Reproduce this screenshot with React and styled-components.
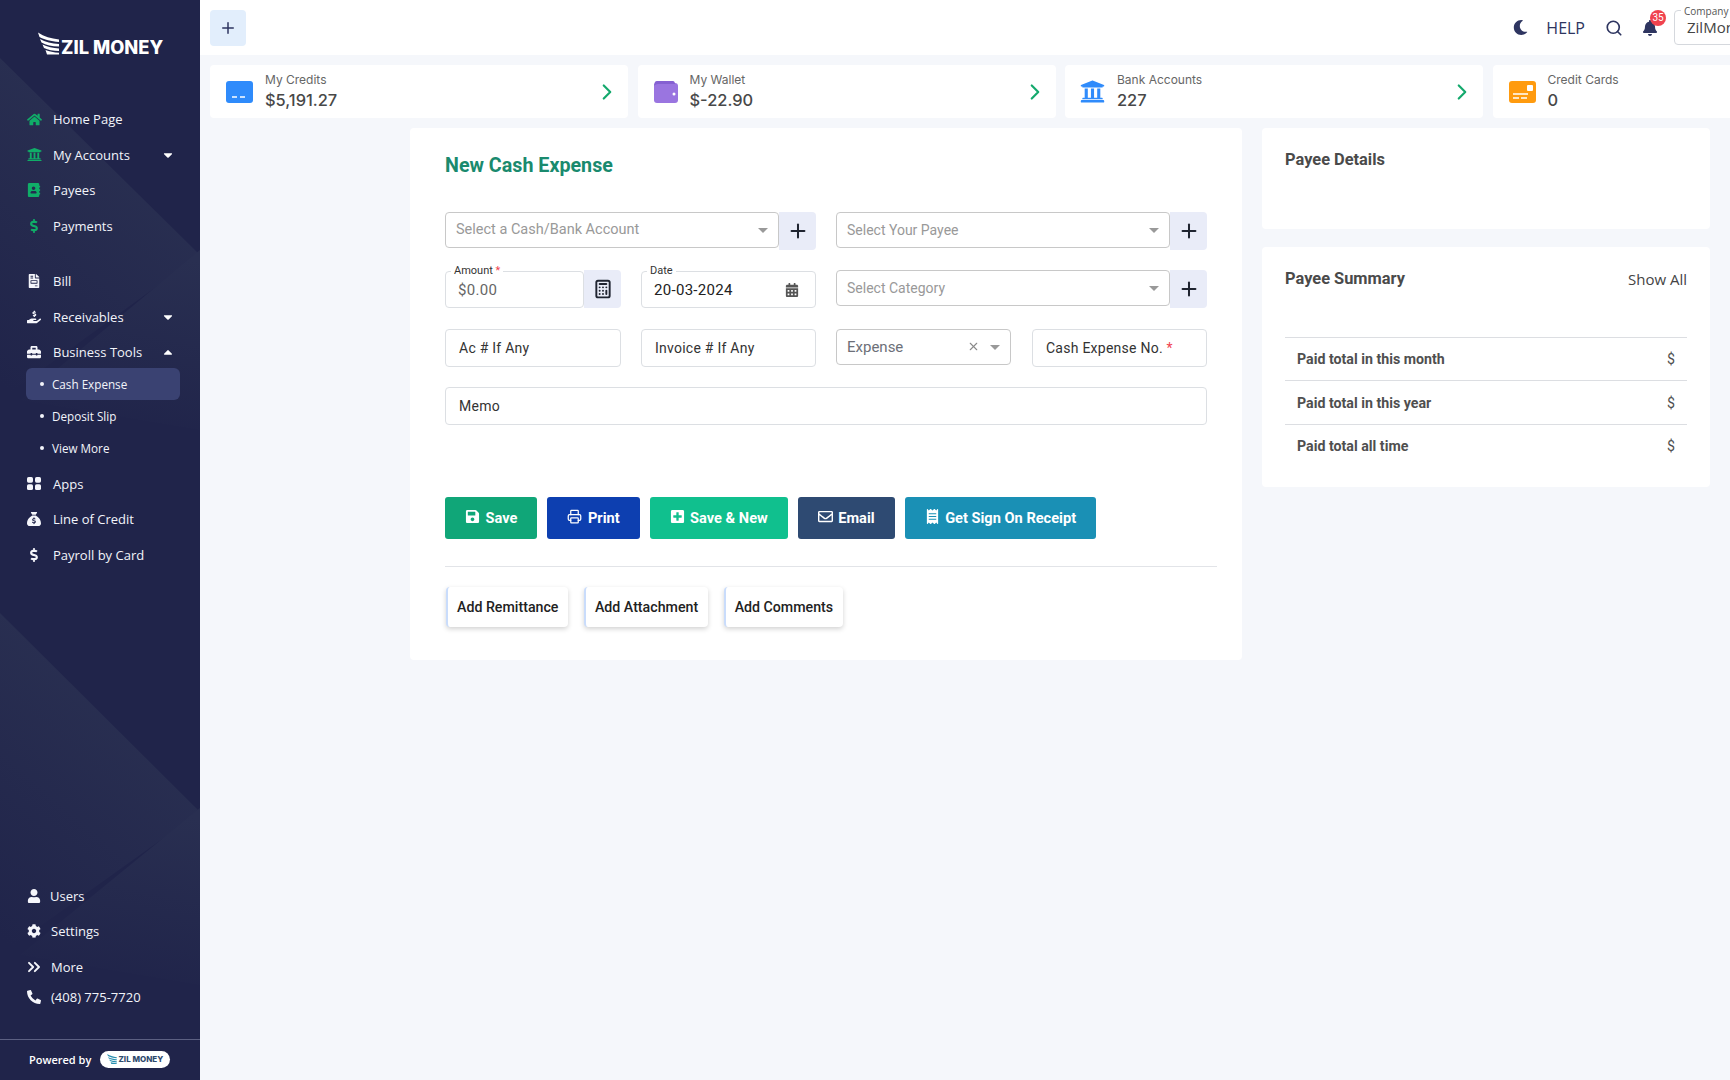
import React from 'react';
import styled, { createGlobalStyle } from 'styled-components';
import {
  FaHome, FaUniversity, FaAddressBook, FaDollarSign, FaFileInvoice, FaHandHoldingUsd, FaToolbox,
  FaUser, FaCog, FaPhoneAlt, FaCaretDown, FaCaretUp, FaSave, FaPlusSquare, FaRegEnvelope,
  FaReceipt, FaMoon, FaBell, FaCalendarAlt,
} from 'react-icons/fa';
import { FaSackDollar } from 'react-icons/fa6';
import { ChevronsRight, ChevronRight, Plus, Search, Printer, Calculator, X } from 'lucide-react';

const GlobalStyle = createGlobalStyle`
  html, body {
    margin: 0;
    height: 100%;
    overflow: hidden;
    background: #f5f7fb;
  }
  * { box-sizing: border-box; }
`;

const Page = styled.div`
  display: flex;
  width: 1730px;
  height: 1080px;
  overflow: hidden;
  font-family: Roboto, "Liberation Sans", sans-serif;
`;

/* sidebar */
const Sidebar = styled.aside`
  position: relative;
  flex: 0 0 200px;
  display: flex;
  flex-direction: column;
  background: #20244a;
  color: #f2f4fa;
  font-family: "Open Sans", "Liberation Sans", sans-serif;
  overflow: hidden;
`;

const SideArt = styled.svg`
  position: absolute;
  top: 0;
  left: 0;
  pointer-events: none;
`;

const LogoBlock = styled.div`
  position: relative;
  height: 101.5px;
  padding: 32px 0 0 38px;
  display: flex;
  align-items: flex-start;
  gap: 2px;
`;

const LogoText = styled.span`
  font-family: Inter, "Liberation Sans", sans-serif;
  font-weight: 800;
  font-size: 18.3px;
  line-height: 22px;
  margin-top: 4px;
  color: #fff;
  white-space: nowrap;
`;

const Nav = styled.nav`
  position: relative;
  display: flex;
  flex-direction: column;
  padding: 0 25px 0 27px;
`;

const BottomNav = styled(Nav)`
  margin-top: auto;
  padding-bottom: 30px;
`;

const NavGap = styled.div`
  height: 20px;
`;

const NavItem = styled.div`
  display: flex;
  align-items: center;
  height: ${(p) => p.$height || 35.5}px;
  font-size: 13px;
  white-space: nowrap;
`;

const NavIcon = styled.span`
  flex: 0 0 ${(p) => p.$slot || 26}px;
  display: flex;
  align-items: center;
  font-size: 14px;
  color: ${(p) => (p.$green ? '#10ad68' : '#f5f6fb')};
`;

const MoreIcon = styled(ChevronsRight)`
  margin-left: -3px;
`;

const Caret = styled.span`
  margin-left: auto;
  display: flex;
  font-size: 14px;
  color: #fff;
`;

const SubList = styled.div`
  display: flex;
  flex-direction: column;
  width: 154px;
  margin: -2px 0 2px -1px;
`;

const SubItem = styled.div`
  display: flex;
  align-items: center;
  gap: 8px;
  height: 32px;
  padding-left: 14px;
  border-radius: 6px;
  font-size: 11.7px;
  background: ${(p) => (p.$active ? '#3a4272' : 'transparent')};
  &::before {
    content: '';
    width: 4px;
    height: 4px;
    border-radius: 50%;
    background: #f2f4fa;
  }
`;

const PoweredRow = styled.div`
  position: relative;
  height: 41px;
  border-top: 1px solid #5c6082;
  display: flex;
  align-items: center;
  padding: 0 0 2px 29px;
  gap: 9px;
  font-size: 11px;
  font-weight: 600;
  color: #fff;
`;

const PoweredPill = styled.div`
  width: 70px;
  height: 17px;
  border-radius: 9px;
  background: #fff;
  display: flex;
  align-items: center;
  justify-content: center;
  gap: 1px;
  font-family: Inter, "Liberation Sans", sans-serif;
  font-size: 8px;
  font-weight: 800;
  color: #2e4a6e;
`;

/* main */
const Main = styled.main`
  flex: 1;
  min-width: 0;
  display: flex;
  flex-direction: column;
`;

const TopBar = styled.header`
  height: 55px;
  flex: 0 0 55px;
  background: #fff;
  display: flex;
  align-items: center;
  padding-left: 10px;
`;

const AddButton = styled.div`
  width: 36px;
  height: 36px;
  border-radius: 4px;
  background: #e2eefc;
  color: #2e3560;
  display: flex;
  align-items: center;
  justify-content: center;
`;

const TopActions = styled.div`
  margin-left: auto;
  display: flex;
  align-items: center;
  color: #2e3560;
`;

const Help = styled.span`
  font-family: "Open Sans", "Liberation Sans", sans-serif;
  font-size: 16px;
  margin: 0 20px 0 18px;
`;

const BellWrap = styled.span`
  position: relative;
  display: flex;
  margin: 0 16px 0 19px;
  font-size: 16px;
`;

const Badge = styled.span`
  position: absolute;
  top: -10px;
  left: 8px;
  width: 16px;
  height: 16px;
  border-radius: 50%;
  background: #f0434f;
  color: #fff;
  font-size: 10px;
  line-height: 16px;
  text-align: center;
`;

const CompanyBox = styled.div`
  position: relative;
  width: 160px;
  height: 35px;
  margin-right: -104px;
  border: 1px solid #d5d8dd;
  border-radius: 4px;
  padding: 6px 0 0 12px;
  font-family: "Open Sans", "Liberation Sans", sans-serif;
  font-size: 15px;
  line-height: 20px;
  color: #444;
`;

const CompanyLabel = styled.span`
  position: absolute;
  top: -6px;
  left: 6px;
  padding: 0 3px;
  background: #fff;
  font-size: 10px;
  line-height: 13px;
  color: #555;
`;

const StatRow = styled.div`
  display: flex;
  gap: 9.5px;
  padding: 10px 0 0 10px;
`;

const StatCard = styled.div`
  flex: 0 0 418px;
  height: 53px;
  background: #fff;
  border-radius: 4px;
  display: flex;
  align-items: center;
  gap: 12px;
  padding: 0 8px 0 ${(p) => p.$pad || 16}px;
`;

const StatText = styled.div`
  display: flex;
  flex-direction: column;
  gap: 2px;
  flex: 1;
  font-family: Inter, "Liberation Sans", sans-serif;
`;

const StatLabel = styled.span`
  font-size: 12px;
  line-height: 15px;
  color: #666;
`;

const StatValue = styled.span`
  font-size: 16.4px;
  font-weight: 500;
  line-height: 22px;
  color: #484848;
`;

const StatArrow = styled.span`
  display: flex;
  color: #14a96d;
`;

const Content = styled.div`
  display: flex;
  justify-content: flex-end;
  align-items: flex-start;
  gap: 20px;
  padding: 10px 20px 0 0;
`;

const FormCard = styled.section`
  width: 832px;
  height: 532px;
  background: #fff;
  border-radius: 4px;
  padding: 26px 25px 0 35px;
`;

const FormTitle = styled.h2`
  margin: 0 0 34px;
  font-size: 19.7px;
  line-height: 24px;
  font-weight: 700;
  color: #1a8a6e;
`;

const FieldGrid = styled.div`
  display: grid;
  width: 762px;
  grid-template-columns: 371px 371px;
  grid-template-rows: 38px 39px 38px 38px;
  gap: 20px;
`;

const FieldRow = styled.div`
  display: flex;
`;

const Split = styled.div`
  display: grid;
  grid-template-columns: ${(p) => p.$first || 176}px 175px;
  gap: ${(p) => p.$gap || 20}px;
`;

const Wide = styled.div`
  grid-column: 1 / 3;
  display: flex;
`;

const Select = styled.div`
  flex: 1;
  height: 36px;
  border: 1px solid #c8c8c8;
  border-radius: 4px;
  background: #fff;
  display: flex;
  align-items: center;
  padding: 0 10px 1px;
  font-size: ${(p) => p.$size || 14}px;
  color: ${(p) => p.$color || '#999'};
`;

const SelectCaret = styled.span`
  margin-left: ${(p) => (p.$inline ? 0 : 'auto')};
  width: 0;
  height: 0;
  margin-top: 1px;
  border-left: 5px solid transparent;
  border-right: 5px solid transparent;
  border-top: 5px solid #999;
`;

const SelectClear = styled.span`
  margin-left: auto;
  margin-right: 10px;
  display: flex;
  color: #8a8a8a;
`;

const Addon = styled.div`
  flex: 0 0 37px;
  height: 38px;
  background: #e9ecf8;
  border-radius: 0 4px 4px 0;
  display: flex;
  align-items: center;
  justify-content: center;
  color: #1f2430;
`;

const Input = styled.div`
  position: relative;
  flex: 1;
  height: ${(p) => p.$height || 38}px;
  margin-top: ${(p) => p.$top || 0}px;
  border: 1px solid #dcdfe3;
  border-radius: 4px;
  background: #fff;
  display: flex;
  align-items: center;
  padding: 0 13px;
  font-size: 14px;
  letter-spacing: 0.25px;
  color: #333;
`;

const Legend = styled.span`
  position: absolute;
  top: -8px;
  left: 5px;
  padding: 0 3px;
  background: #fff;
  font-size: 11px;
  line-height: 13px;
  letter-spacing: 0;
  color: #333;
`;

const Required = styled.span`
  color: #f0434f;
`;

const InputValue = styled.span`
  font-size: 15px;
  margin-left: -1px;
  letter-spacing: 0.3px;
  color: ${(p) => p.$color || '#222'};
`;

const DateIcon = styled.span`
  margin-left: auto;
  margin-right: 3px;
  display: flex;
  font-size: 14px;
  color: #555;
`;

const ActionRow = styled.div`
  display: flex;
  gap: 10px;
  margin-top: 72px;
`;

const ActionButton = styled.div`
  height: 42px;
  border-radius: 3px;
  background: ${(p) => p.$bg};
  color: #fff;
  display: flex;
  align-items: center;
  gap: 5.5px;
  padding: 0 20px;
  font-size: 14.6px;
  font-weight: 700;
  svg { flex: none; margin-top: -3px; }
`;

const Divider = styled.hr`
  margin: 27px 0 20px;
  border: 0;
  border-top: 1px solid #e2e4e8;
`;

const ExtraRow = styled.div`
  display: flex;
  gap: 15.5px;
  padding-left: 1px;
`;

const ExtraButton = styled.div`
  height: 40px;
  display: flex;
  align-items: center;
  padding: 0 10px 0 9px;
  background: #fff;
  border-left: 2px solid #c9dcfb;
  border-radius: 4px;
  box-shadow: 0 2px 5px rgba(0, 0, 0, 0.18);
  font-size: 14.2px;
  font-weight: 500;
  color: #222;
`;

const SideColumn = styled.div`
  width: 448px;
  display: flex;
  flex-direction: column;
  gap: 18px;
`;

const SideCard = styled.section`
  height: ${(p) => p.$height}px;
  background: #fff;
  border-radius: 4px;
  padding: 22px 23px 0;
`;

const SideHead = styled.div`
  display: flex;
  justify-content: space-between;
  align-items: center;
  height: 20px;
`;

const SideTitle = styled.h3`
  margin: 0;
  font-size: 16.4px;
  line-height: 20px;
  font-weight: 700;
  color: #4a4a4a;
`;

const ShowAll = styled.span`
  font-family: "Open Sans", "Liberation Sans", sans-serif;
  font-size: 15px;
  color: #444;
`;

const SummaryList = styled.div`
  margin-top: 47.9px;
`;

const SummaryRow = styled.div`
  height: 43.5px;
  border-top: 1px solid #dcdee2;
  display: flex;
  justify-content: space-between;
  align-items: center;
  padding: 0 12px;
  font-size: 14.2px;
  font-weight: 700;
  color: #4f4f4f;
`;

const SummaryValue = styled.span`
  font-weight: 400;
`;

function Wing({ width = 21, height = 22, color = '#fff' }) {
  return (
    <svg width={width} height={height} viewBox="0 0 21 22" fill={color}>
      <path d="M0 0 C6 4 13 6 21 7 L21 9.5 C13 9 6 7 1.5 4.5Z" />
      <path d="M2 6.5 C7 9.5 14 11 21 11.5 L21 14 C14 14 8 12.5 3.5 10Z" />
      <path d="M4.5 12 C9 14.5 15 15.5 21 16 L21 18.5 C15 18.5 10 17.5 6 15.5Z" />
      <path d="M7.5 17.5 C11 19 16 20 21 20.3 L21 22 L9 22Z" />
    </svg>
  );
}

function AppsIcon() {
  return (
    <svg width="14" height="13" viewBox="0 0 14 13" fill="currentColor">
      <rect width="6" height="5.7" rx="1.6" />
      <rect x="8" width="6" height="5.7" rx="1.6" />
      <rect y="7.3" width="6" height="5.7" rx="1.6" />
      <rect x="8" y="7.3" width="6" height="5.7" rx="1.6" />
    </svg>
  );
}

function CreditIcon() {
  return (
    <svg width="27" height="22" viewBox="0 0 27 22">
      <rect width="27" height="22" rx="3" fill="#2f8bfb" />
      <path d="M6 16h5M14 16h5" stroke="#fff" strokeWidth="1.6" />
    </svg>
  );
}

function WalletIcon() {
  return (
    <svg width="24" height="22" viewBox="0 0 24 22">
      <rect y="2" width="24" height="20" rx="3" fill="#9a75e0" />
      <path d="M0 5c0-3 1-5 3-5h16c1 0 2 1 2 3H4c-2 0-3 1-4 2z" fill="#8560d2" />
      <circle cx="20" cy="13" r="1.5" fill="#fff" />
    </svg>
  );
}

function CardIcon() {
  return (
    <svg width="27" height="22" viewBox="0 0 27 22">
      <rect width="27" height="22" rx="3" fill="#ff9b0f" />
      <rect x="18" y="4" width="6" height="6" rx="1" fill="#fff" />
      <path d="M4 13h15M4 17h6M12 17h6" stroke="#fff" strokeWidth="1.4" />
    </svg>
  );
}

const mainNav = [
  { label: 'Home Page', icon: <FaHome size={15} />, green: true },
  { label: 'My Accounts', icon: <FaUniversity size={15} />, green: true, caret: <FaCaretDown /> },
  { label: 'Payees', icon: <FaAddressBook />, green: true },
  { label: 'Payments', icon: <FaDollarSign />, green: true },
];

const stats = [
  { label: 'My Credits', value: '$5,191.27', icon: <CreditIcon /> },
  { label: 'My Wallet', value: '$-22.90', icon: <WalletIcon /> },
  { label: 'Bank Accounts', value: '227', icon: <FaUniversity size={25} color="#2f8bfb" />, pad: 15 },
  { label: 'Credit Cards', value: '0', icon: <CardIcon /> },
];

const actions = [
  { label: 'Save', bg: '#10a678', icon: <FaSave size={15} /> },
  { label: 'Print', bg: '#0d3fb0', icon: <Printer size={15} strokeWidth={2} /> },
  { label: 'Save & New', bg: '#10c08e', icon: <FaPlusSquare size={15} /> },
  { label: 'Email', bg: '#2e4a72', icon: <FaRegEnvelope size={15} /> },
  { label: 'Get Sign On Receipt', bg: '#1a90b5', icon: <FaReceipt size={15} /> },
];

const summary = ['Paid total in this month', 'Paid total in this year', 'Paid total all time'];

export default function App() {
  return (
    <Page>
      <GlobalStyle />
      <Sidebar>
        <SideArt width="200" height="1080" viewBox="0 0 200 1080">
          <defs>
            <linearGradient id="fadeLeft" x1="0.5" y1="0.2" x2="0.1" y2="1">
              <stop offset="0" stopColor="#292f51" />
              <stop offset="1" stopColor="#20244a" />
            </linearGradient>
            <linearGradient id="fadeRight" x1="0.7" y1="0" x2="0.5" y2="1">
              <stop offset="0" stopColor="#292f51" />
              <stop offset="1" stopColor="#20244a" />
            </linearGradient>
          </defs>
          <polygon points="0,58 200,255 0,400" fill="url(#fadeLeft)" />
          <polygon points="200,250 200,430 20,400" fill="url(#fadeRight)" />
          <polygon points="0,613 200,812 0,955" fill="url(#fadeLeft)" />
          <polygon points="200,808 200,985 20,955" fill="url(#fadeRight)" />
        </SideArt>
        <LogoBlock>
          <Wing height={23} />
          <LogoText>ZIL MONEY</LogoText>
        </LogoBlock>
        <Nav>
          {mainNav.map((item) => (
            <NavItem key={item.label}>
              <NavIcon $green={item.green}>{item.icon}</NavIcon>
              {item.label}
              {item.caret && <Caret>{item.caret}</Caret>}
            </NavItem>
          ))}
          <NavGap />
          <NavItem><NavIcon><FaFileInvoice /></NavIcon>Bill</NavItem>
          <NavItem><NavIcon><FaHandHoldingUsd /></NavIcon>Receivables<Caret><FaCaretDown /></Caret></NavItem>
          <NavItem><NavIcon><FaToolbox /></NavIcon>Business Tools<Caret><FaCaretUp /></Caret></NavItem>
          <SubList>
            <SubItem $active>Cash Expense</SubItem>
            <SubItem>Deposit Slip</SubItem>
            <SubItem>View More</SubItem>
          </SubList>
          <NavItem><NavIcon><AppsIcon /></NavIcon>Apps</NavItem>
          <NavItem><NavIcon><FaSackDollar /></NavIcon>Line of Credit</NavItem>
          <NavItem><NavIcon><FaDollarSign /></NavIcon>Payroll by Card</NavItem>
        </Nav>
        <BottomNav>
          <NavItem><NavIcon $slot={23}><FaUser /></NavIcon>Users</NavItem>
          <NavItem><NavIcon $slot={24}><FaCog /></NavIcon>Settings</NavItem>
          <NavItem><NavIcon $slot={24}><MoreIcon size={20} strokeWidth={2.3} /></NavIcon>More</NavItem>
          <NavItem $height={24.5}><NavIcon $slot={24}><FaPhoneAlt /></NavIcon>(408) 775-7720</NavItem>
        </BottomNav>
        <PoweredRow>
          Powered by
          <PoweredPill><Wing width={10} height={10} color="#2a8fb0" />ZIL MONEY</PoweredPill>
        </PoweredRow>
      </Sidebar>

      <Main>
        <TopBar>
          <AddButton><Plus size={18} /></AddButton>
          <TopActions>
            <FaMoon size={15} />
            <Help>HELP</Help>
            <Search size={18} strokeWidth={2.2} />
            <BellWrap><FaBell /><Badge>35</Badge></BellWrap>
            <CompanyBox><CompanyLabel>Company</CompanyLabel>ZilMoney</CompanyBox>
          </TopActions>
        </TopBar>

        <StatRow>
          {stats.map((s) => (
            <StatCard key={s.label} $pad={s.pad}>
              {s.icon}
              <StatText>
                <StatLabel>{s.label}</StatLabel>
                <StatValue>{s.value}</StatValue>
              </StatText>
              <StatArrow><ChevronRight size={26} strokeWidth={2} /></StatArrow>
            </StatCard>
          ))}
        </StatRow>

        <Content>
          <FormCard>
            <FormTitle>New Cash Expense</FormTitle>
            <FieldGrid>
              <FieldRow>
                <Select $size={14.5}>Select a Cash/Bank Account<SelectCaret /></Select>
                <Addon><Plus size={22} strokeWidth={2.2} /></Addon>
              </FieldRow>
              <FieldRow>
                <Select>Select Your Payee<SelectCaret /></Select>
                <Addon><Plus size={22} strokeWidth={2.2} /></Addon>
              </FieldRow>
              <Split>
                <FieldRow>
                  <Input $height={37} $top={1}>
                    <Legend>Amount <Required>*</Required></Legend>
                    <InputValue $color="#666">$0.00</InputValue>
                  </Input>
                  <Addon><Calculator size={20} strokeWidth={2.3} /></Addon>
                </FieldRow>
                <FieldRow>
                  <Input $height={37} $top={1}>
                    <Legend>Date</Legend>
                    <InputValue>20-03-2024</InputValue>
                    <DateIcon><FaCalendarAlt /></DateIcon>
                  </Input>
                </FieldRow>
              </Split>
              <FieldRow>
                <Select>Select Category<SelectCaret /></Select>
                <Addon><Plus size={22} strokeWidth={2.2} /></Addon>
              </FieldRow>
              <Split>
                <FieldRow><Input>Ac # If Any</Input></FieldRow>
                <FieldRow><Input>Invoice # If Any</Input></FieldRow>
              </Split>
              <Split $first={175} $gap={21}>
                <FieldRow>
                  <Select $color="#6c6f78" $size={15}>
                    Expense
                    <SelectClear><X size={13} /></SelectClear>
                    <SelectCaret $inline />
                  </Select>
                </FieldRow>
                <FieldRow><Input>Cash Expense No.&nbsp;<Required>*</Required></Input></FieldRow>
              </Split>
              <Wide><Input>Memo</Input></Wide>
            </FieldGrid>

            <ActionRow>
              {actions.map((a) => (
                <ActionButton key={a.label} $bg={a.bg}>{a.icon}{a.label}</ActionButton>
              ))}
            </ActionRow>
            <Divider />
            <ExtraRow>
              <ExtraButton>Add Remittance</ExtraButton>
              <ExtraButton>Add Attachment</ExtraButton>
              <ExtraButton>Add Comments</ExtraButton>
            </ExtraRow>
          </FormCard>

          <SideColumn>
            <SideCard $height={101}>
              <SideHead><SideTitle>Payee Details</SideTitle></SideHead>
            </SideCard>
            <SideCard $height={240}>
              <SideHead>
                <SideTitle>Payee Summary</SideTitle>
                <ShowAll>Show All</ShowAll>
              </SideHead>
              <SummaryList>
                {summary.map((row) => (
                  <SummaryRow key={row}>{row}<SummaryValue>$</SummaryValue></SummaryRow>
                ))}
              </SummaryList>
            </SideCard>
          </SideColumn>
        </Content>
      </Main>
    </Page>
  );
}
